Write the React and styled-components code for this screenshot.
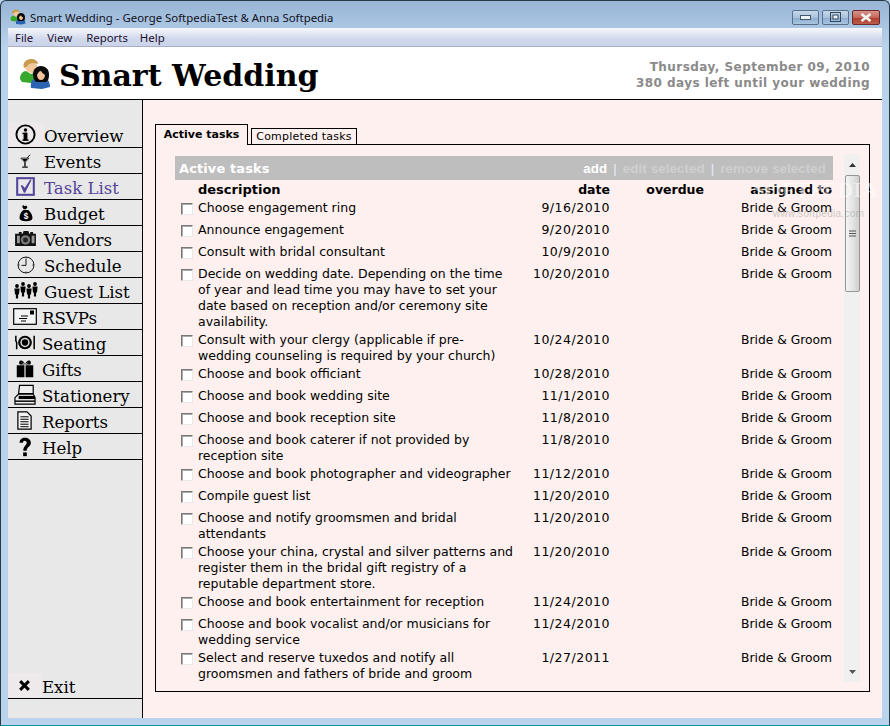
import React from "react";
import styled, { createGlobalStyle } from "styled-components";

const Global = createGlobalStyle`
  html, body { margin: 0; padding: 0; background: #b9d3ec; overflow: hidden; }
  * { box-sizing: border-box; }
`;

const Win = styled.div`
  width: 890px; height: 726px; display: flex; flex-direction: column;
  background: linear-gradient(#98b5d6 0, #b9d3ec 46px, #b9d3ec 100%);
  border: 1px solid #2a3a44; border-bottom-color: #0e8f9c; border-radius: 6px 6px 0 0;
  padding: 0 7px 7px 7px; overflow: hidden;
`;
const TitleBar = styled.div`
  height: 27px; flex: none; display: flex; align-items: center; padding: 0 0 0 2px;
  font: 11.4px "Noto Sans", sans-serif; color: #101020;
`;
const TitleText = styled.span`margin-left: 4px; flex: 1; padding-top: 6px;`;
const LogoSlot = styled.span`display: flex; padding-top: 4px;`;
const Caption = styled.div`display: flex; gap: 3px; margin-top: 5px; margin-right: 2px;`;
const CapBtn = styled.div`
  width: ${p => p.$w}px; height: 15px; border-radius: 2px; display: flex; align-items: center; justify-content: center;
  border: 1px solid ${p => p.$close ? "#6e2a2a" : "#56708e"};
  background: ${p => p.$close ? "linear-gradient(#d69488, #c4675a 50%, #ae4030 55%, #bb5c4a)" : "linear-gradient(#c6d8ea, #a9c2dc 50%, #8fadcd 55%, #a9c6e2)"};
`;
const MenuBar = styled.div`
  height: 19px; flex: none; display: flex; align-items: center; padding: 1px 0 0 7px;
  background: linear-gradient(#f6f8fc, #d0d8ec 60%, #ccd4ea); border-bottom: 1px solid #a8aec6;
  font: 11.4px "Noto Sans", sans-serif; color: #1c1030;
`;
const MenuItem = styled.span`margin-right: ${p => p.$mr}px;`;
const Banner = styled.header`
  height: 53px; flex: none; background: #fff; border-bottom: 1px solid #000; display: flex;
  align-items: center; justify-content: space-between; padding: 2px 12px 0 11px;
`;
const Brand = styled.div`display: flex; align-items: center; gap: 8px;`;
const BrandName = styled.h1`
  margin: 0; padding-top: 3px; font: bold 30px/1 "DejaVu Serif", serif; color: #000;
`;
const DateBox = styled.div`
  text-align: right; font: bold 12px/16px "DejaVu Sans", sans-serif; color: #8a8a8a; letter-spacing: .45px; padding-top: 2px;
`;
const Body = styled.div`flex: 1; display: flex; min-height: 0;`;
const Side = styled.nav`
  width: 135px; flex: none; background: #e8e8e8; border-right: 1px solid #000;
  display: flex; flex-direction: column; padding-top: 22px; padding-bottom: 19px;
`;
const NavRow = styled.div`
  height: 26px; display: flex; align-items: center; border-bottom: 1px solid #000;
  font: 16.6px "DejaVu Serif", serif; color: ${p => p.$active ? "#55439b" : "#000"};
`;
const NavLabel = styled.span`padding-top: 3px;`;
const ExitRow = styled(NavRow)`margin-top: auto;`;
const IconCell = styled.span`
  width: ${p => p.$w}px; height: 100%; flex: none; display: flex; align-items: center; justify-content: center;
  padding-right: 1px; background: ${p => p.$tint ? "#eeeaec" : "transparent"};
`;
const Main = styled.main`
  flex: 1; background: #fdf0ee; padding: 24px 12px 26px 12px; display: flex; flex-direction: column; min-width: 0; position: relative;
`;
const Tabs = styled.div`display: flex; align-items: flex-end; gap: 3px; height: 21px; flex: none; position: relative; z-index: 1; margin-bottom: -1px;`;
const Tab = styled.div`
  border: 1px solid #000; background: #fdf0ee; display: flex; justify-content: center; align-items: center;
  width: ${p => p.$w}px; height: ${p => p.$active ? 21 : 17}px; color: #000;
  font: ${p => p.$active ? "bold" : "normal"} 11px "DejaVu Sans", sans-serif;
  ${p => p.$active ? "border-bottom: none; padding-bottom: 2px;" : "letter-spacing: .2px;"}
`;
const Panel = styled.section`
  flex: 1; border: 1px solid #000; display: flex; padding: 9px 9px 9px 19px; gap: 11px; min-height: 0;
`;
const Content = styled.div`flex: 1; min-width: 0; padding-top: 2px;`;
const HeadBar = styled.div`
  height: 24px; background: #bebebe; display: flex; align-items: center; justify-content: space-between;
  padding: 0 7px 0 4px; font: bold 13px "DejaVu Sans", sans-serif; color: #fff; letter-spacing: .1px;
`;
const Actions = styled.div`display: flex; gap: 6px; align-items: center; font: bold 13.3px "Liberation Sans", sans-serif;`;
const Act = styled.span`color: ${p => p.$off ? "#cfcfcf" : "#fff"};`;
const Sep = styled.span`color: #e8eef8; font-weight: normal;`;
const Grid = styled.div`
  display: grid; grid-template-columns: 23px 320px 92px 94px 128px;
  font: 12.5px/16px "DejaVu Sans", sans-serif; color: #000; white-space: nowrap;
`;
const HeadGrid = styled(Grid)`font: bold 13px/16px "DejaVu Sans", sans-serif; height: 20px; align-items: center;`;
const RowGrid = styled(Grid)`min-height: 22px; padding-bottom: 2px;`;
const Right = styled.div`text-align: right;`;
const HeadRight = styled(Right)`font-size: 12.5px;`;
const OwnerCell = styled(Right)`font-size: 12.3px;`;
const DateCell = styled(Right)`letter-spacing: .5px;`;
const Box = styled.span`
  display: block; width: 12px; height: 12px; margin: 3px 0 0 6px;
  background: #fff; border: 1px solid; border-color: #777 #e8e8e8 #e8e8e8 #777;
  box-shadow: inset 1px 1px 0 #aaa;
`;
const Scroll = styled.div`
  width: 16px; flex: none; background: #f0f0f0; display: flex; flex-direction: column; align-items: center;
`;
const Arrow = styled.div`height: 21px; flex: none; display: flex; align-items: center; justify-content: center; width: 100%;`;
const Thumb = styled.div`
  width: 15px; height: 117px; flex: none; border: 1px solid #979797; border-radius: 2px;
  background: linear-gradient(90deg, #f4f4f4, #e4e4e4 50%, #cfcfcf); display: flex; align-items: center; justify-content: center; padding-bottom: 1px;
`;
const Spacer = styled.div`flex: 1;`;
const Mark = styled.div`
  position: absolute; left: 610px; top: 80px; pointer-events: none; color: rgba(255,255,255,.5);
  font: bold 21px/1 "Liberation Serif", serif; letter-spacing: .5px; white-space: nowrap;
`;
const MarkSub = styled.div`font: 10px/1 "Liberation Sans", sans-serif; letter-spacing: .3px; margin: 8px 0 0 20px; color: rgba(140,140,140,.45);`;

const Logo = ({ s }) => (
  <svg width={s} height={s} viewBox="0 0 32 32">
    <path d="M1 21c0-5 3-8 6-8l5 3 5-2c2 2 2 5 1 8l-6 3-9-1z" fill="#37a82c" />
    <path d="M6 8c0 4 3 7 7 7s5-3 5-6-2-5-6-5-6 1-6 4z" fill="#f3c79c" />
    <path d="M5 10C3 5 7 1 12 1c4 0 7 2 7 5-3-1-7-1-9 0-1 2-3 3-5 4z" fill="#c89c4c" />
    <path d="M12 30c-1-6 2-10 6-10l4 2 4-2c3 1 5 4 5 9l-8 2z" fill="#2a62b4" />
    <path d="M14 16c0-5 4-8 8-8s8 3 8 8-1 7-3 8h-10c-2-2-3-5-3-8z" fill="#0c0c0c" />
    <path d="M18 17c1-2 2-4 4-4 1 2 3 3 4 4 0 3-2 5-4 5s-4-2-4-5z" fill="#f1c49a" />
  </svg>
);
const I = ({ children, w = 24, h = 24, vb = "0 0 24 24" }) => <svg width={w} height={h} viewBox={vb}>{children}</svg>;
const Icons = {
  info: <I w={21} h={21}><circle cx="12" cy="12" r="10.4" fill="none" stroke="#000" strokeWidth="2.2"/><circle cx="12" cy="6.8" r="2" fill="#000"/><rect x="9.8" y="10" width="4.4" height="9" fill="#000"/><rect x="8.5" y="10" width="5" height="1.6"/><rect x="8.5" y="17.6" width="7" height="1.6"/></I>,
  glass: <I w={14} h={20}><path d="M3 7h14l-6 7v8h3.500v1H6v-1h3.500v-8z" fill="none" stroke="#000" strokeWidth="1.200"/><path d="M5 8h10l-5 5.500z" fill="#000"/><path d="M14 7l5-6" stroke="#000" strokeWidth="1.500"/></I>,
  check: <I w={19} h={19}><rect x="1.5" y="1.5" width="21" height="21" fill="none" stroke="#55439b" strokeWidth="2.6"/><path d="M6 11l2-1 3 4 7-11 1.5 1-8 16h-1.5z" fill="#55439b"/></I>,
  bag: <I w={18} h={22}><path d="M8 1l2 2 2-1 2 2-2 3H9L7 4z" fill="#000"/><path d="M8.500 8h6.500c4 3 6 8 5.500 11-.5 3-3.500 4-8.500 4s-8-1-8.500-4C3 15 5 11 8.500 8z" fill="#000"/><text x="12" y="20" fontSize="11" fontFamily="Liberation Sans" fontWeight="bold" textAnchor="middle" fill="#fff">$</text></I>,
  camera: <I w={23} h={18} vb="0 0 24 19"><path d="M1 4h4V2h3v2h1l1-3h5l1 3h1V2h3v2h3v13H1z" fill="#111"/><circle cx="12" cy="10.5" r="5" fill="#777"/><circle cx="12" cy="10.5" r="2.6" fill="#222"/><rect x="3" y="6" width="3" height="8" fill="#999"/><rect x="18.5" y="6" width="3" height="8" fill="#999"/></I>,
  clock: <I w={18} h={18}><circle cx="12" cy="12" r="10.6" fill="none" stroke="#000" strokeWidth="1.2"/><path d="M12 4v8.5H6" fill="none" stroke="#000" strokeWidth="1.2"/><path d="M12 1.5v2M22.500 12h-2M12 22.500v-2M1.500 12h2" stroke="#000" strokeWidth="1"/></I>,
  guests: <I w={24} h={17} vb="0 0 24 17">{[3, 9, 15, 21].map((x, i) => <g key={x}><circle cx={x} cy={i % 2 ? 2 : 4} r="1.900" fill="#000"/><path d={`M${x - 2.6} ${i % 2 ? 4.500 : 6.500}h5.200l-.6 6h-.9v4h-2.200v-4h-.9z`} fill="#000"/></g>)}</I>,
  rsvp: <I w={24} h={17} vb="0 0 24 17"><rect x=".7" y=".7" width="22.6" height="15.6" fill="#f4f4f4" stroke="#000" strokeWidth="1.2"/><rect x="17" y="2.5" width="4" height="4" fill="#000"/><path d="M8 8h7M6 10.500h8M8 13h5" stroke="#000" strokeWidth="1"/></I>,
  plate: <I w={20} h={15} vb="0 0 24 18"><circle cx="12" cy="9" r="8.200" fill="#000"/><circle cx="12" cy="9" r="5.600" fill="#ddd"/><circle cx="12" cy="9" r="3.800" fill="#000"/><path d="M1 1v6l1 2v8M23 1v16" stroke="#000" strokeWidth="1.800" fill="none"/></I>,
  gift: <I w={18} h={18}><path d="M1 7h10.200v16H1zM12.800 7H23v16H12.800z" fill="#000"/><path d="M5 6c-2-3 0-6 3-5 2 .5 3 3 4 5 1-2 2-4.500 4-5 3-1 5 2 3 5z" fill="#000"/><path d="M8.500 3.500L11 6M15.500 3.500L13 6" stroke="#fff" strokeWidth="1"/></I>,
  printer: <I w={22} h={21} vb="0 0 24 23"><path d="M6 1.500h15v9H5z" fill="#eee" stroke="#000" strokeWidth="1.300"/><path d="M5 11L1 15v7h22v-7l-2-4z" fill="#eee" stroke="#000" strokeWidth="1.300"/><rect x="5" y="13" width="18" height="3.500" fill="#000"/><rect x="1" y="18" width="22" height="1.600" fill="#000"/></I>,
  report: <I w={15} h={19} vb="0 0 18 23"><path d="M1 1h11l5 5v16H1z" fill="#f4f4f4" stroke="#000" strokeWidth="1.500"/><path d="M4 7h10M4 10h10M4 13h10M4 16h10M4 19h10" stroke="#000" strokeWidth="1.200"/></I>,
  help: <I w={14} h={20} vb="0 0 16 24"><path d="M1.500 7C1.500 3 4.500 1 8 1s7 2 7 6c0 5-5 5-5 9.500H6c0-6 4-6 4-9.500 0-1.500-1-2.500-2.300-2.500S5.500 5.500 5.500 7z" fill="#000"/><rect x="5.800" y="18.500" width="4.400" height="4.500" fill="#000"/></I>,
  exit: <I w={13} h={13}><path d="M4 4l16 16M20 4L4 20" stroke="#000" strokeWidth="5.500"/></I>,
};

const nav = [
  ["info", "Overview", 36, false, true], ["glass", "Events", 36], ["check", "Task List", 36, true], ["bag", "Budget", 36],
  ["camera", "Vendors", 36], ["clock", "Schedule", 36], ["guests", "Guest List", 36], ["rsvp", "RSVPs", 34],
  ["plate", "Seating", 34], ["gift", "Gifts", 34], ["printer", "Stationery", 34], ["report", "Reports", 34], ["help", "Help", 34],
];

const tasks = [
  [["Choose engagement ring"], "9/16/2010"],
  [["Announce engagement"], "9/20/2010"],
  [["Consult with bridal consultant"], "10/9/2010"],
  [["Decide on wedding date. Depending on the time", "of year and lead time you may have to set your", "date based on reception and/or ceremony site", "availability."], "10/20/2010"],
  [["Consult with your clergy (applicable if pre-", "wedding counseling is required by your church)"], "10/24/2010"],
  [["Choose and book officiant"], "10/28/2010"],
  [["Choose and book wedding site"], "11/1/2010"],
  [["Choose and book reception site"], "11/8/2010"],
  [["Choose and book caterer if not provided by", "reception site"], "11/8/2010"],
  [["Choose and book photographer and videographer"], "11/12/2010"],
  [["Compile guest list"], "11/20/2010"],
  [["Choose and notify groomsmen and bridal", "attendants"], "11/20/2010"],
  [["Choose your china, crystal and silver patterns and", "register them in the bridal gift registry of a", "reputable department store."], "11/20/2010"],
  [["Choose and book entertainment for reception"], "11/24/2010"],
  [["Choose and book vocalist and/or musicians for", "wedding service"], "11/24/2010"],
  [["Select and reserve tuxedos and notify all", "groomsmen and fathers of bride and groom"], "1/27/2011"],
];

export default function App() {
  return (
    <Win>
      <Global />
      <TitleBar>
        <LogoSlot><Logo s={16} /></LogoSlot>
        <TitleText>Smart Wedding - George SoftpediaTest &amp; Anna Softpedia</TitleText>
        <Caption>
          <CapBtn $w={27}><svg width="11" height="5"><rect x=".5" y=".5" width="10" height="4" fill="#eef2f6" stroke="#44566c"/></svg></CapBtn>
          <CapBtn $w={27}><svg width="11" height="10"><rect x=".5" y=".5" width="10" height="9" fill="none" stroke="#33465c"/><rect x="3" y="3" width="5" height="4" fill="#eef2f6" stroke="#33465c"/></svg></CapBtn>
          <CapBtn $w={28} $close><svg width="12" height="9"><path d="M1.500 1l9 7M10.500 1l-9 7" stroke="#f4f4f4" strokeWidth="2.600"/></svg></CapBtn>
        </Caption>
      </TitleBar>
      <MenuBar>
        <MenuItem $mr={14}>File</MenuItem><MenuItem $mr={14}>View</MenuItem><MenuItem $mr={12}>Reports</MenuItem><MenuItem $mr={0}>Help</MenuItem>
      </MenuBar>
      <Banner>
        <Brand><Logo s={32} /><BrandName>Smart Wedding</BrandName></Brand>
        <DateBox>Thursday, September 09, 2010<br />380 days left until your wedding</DateBox>
      </Banner>
      <Body>
        <Side>
          {nav.map(([ic, label, w, active, tint]) => (
            <NavRow key={label} $active={active}><IconCell $w={w} $tint={tint}>{Icons[ic]}</IconCell><NavLabel>{label}</NavLabel></NavRow>
          ))}
          <ExitRow><IconCell $w={34} $tint>{Icons.exit}</IconCell><NavLabel>Exit</NavLabel></ExitRow>
        </Side>
        <Main>
          <Tabs>
            <Tab $active $w={93}>Active tasks</Tab>
            <Tab $w={106}>Completed tasks</Tab>
          </Tabs>
          <Panel>
            <Content>
              <HeadBar>
                <span>Active tasks</span>
                <Actions>
                  <Act>add</Act><Sep>|</Sep><Act $off>edit selected</Act><Sep>|</Sep><Act $off>remove selected</Act>
                </Actions>
              </HeadBar>
              <HeadGrid>
                <span /><span>description</span><HeadRight>date</HeadRight><HeadRight>overdue</HeadRight><HeadRight>assigned to</HeadRight>
              </HeadGrid>
              {tasks.map(([lines, date]) => (
                <RowGrid key={lines[0]}>
                  <Box />
                  <div>{lines.map(l => <div key={l}>{l}</div>)}</div>
                  <DateCell>{date}</DateCell>
                  <span />
                  <OwnerCell>Bride &amp; Groom</OwnerCell>
                </RowGrid>
              ))}
            </Content>
            <Scroll>
              <Arrow><svg width="7" height="4"><path d="M3.500 0L7 4H0z" fill="#333"/></svg></Arrow>
              <Thumb><svg width="7" height="7"><path d="M0 1h7M0 3.500h7M0 6h7" stroke="#555"/></svg></Thumb>
              <Spacer />
              <Arrow><svg width="7" height="4"><path d="M0 0h7L3.500 4z" fill="#555"/></svg></Arrow>
            </Scroll>
          </Panel>
          <Mark>SOFTPEDIA<MarkSub>www.softpedia.com</MarkSub></Mark>
        </Main>
      </Body>
    </Win>
  );
}
